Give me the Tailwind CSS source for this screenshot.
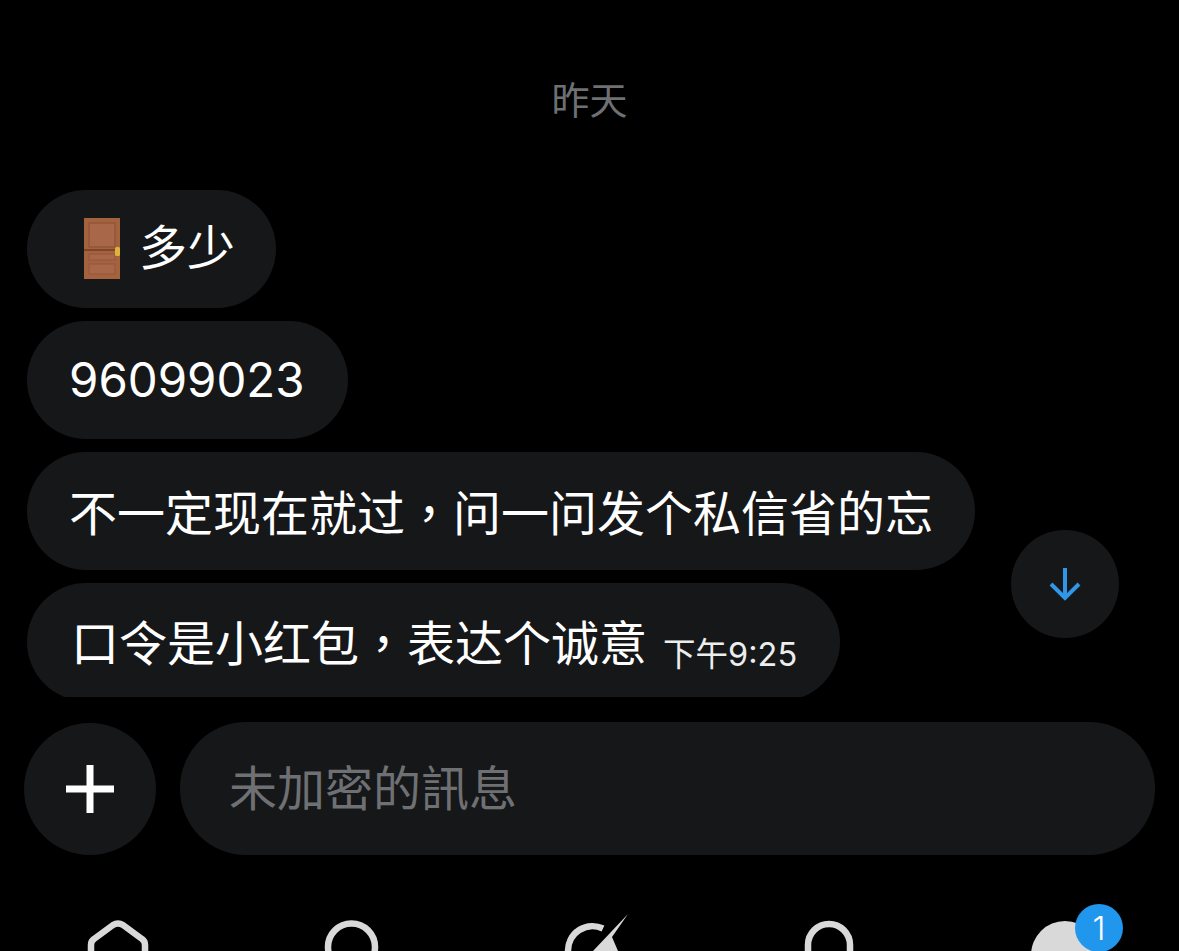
<!DOCTYPE html>
<html>
  <head>
    <meta charset="UTF-8" />
    <title>chat</title>
    <script src="https://cdn.jsdelivr.net/npm/@tailwindcss/browser@4"></script>
  </head>
  <body class="bg-black">
    <div class="w-[1179px] h-[951px] overflow-hidden bg-black text-white flex flex-col font-['Inter','Noto_Sans_CJK_SC',sans-serif]">
      <!-- messages -->
      <div class="relative h-[697px] shrink-0 overflow-hidden pl-[27px] pt-[73px]">
        <div class="text-center text-[38px] leading-[54px] text-[#6e7074] -ml-[27px]">昨天</div>
        <div class="flex flex-col items-start gap-[13px] mt-[63px]">
          <div class="h-[118px] rounded-[59px] bg-[#161719] pl-[57px] pr-[41px] flex items-center gap-[19px] text-[48px]">
            <svg class="-mt-[2px]" width="36" height="61" viewBox="0 0 36 61">
              <rect x="0" y="0" width="36" height="61" fill="#a4623f"/>
              <rect x="5" y="5" width="26" height="24" fill="#a9674a" stroke="#935639" stroke-width="1.5"/>
              <rect x="0" y="31" width="36" height="2" fill="#7d452c"/>
              <rect x="5" y="36" width="26" height="6" fill="#a9674a" stroke="#935639" stroke-width="1"/>
              <rect x="5" y="46" width="26" height="10" fill="#a9674a" stroke="#935639" stroke-width="1"/>
              <rect x="31" y="29" width="5" height="9" rx="1.5" fill="#e0b23c"/>
            </svg>
            <span class="-mt-[2px]">多少</span>
          </div>
          <div class="h-[118px] rounded-[59px] bg-[#161719] pl-[42px] pr-[43px] flex items-center text-[47.4px]">96099023</div>
          <div class="h-[118px] rounded-[59px] bg-[#161719] pl-[42px] pr-[42px] pt-[2px] flex items-center text-[48px] whitespace-nowrap">
            <span>不一定现在就过<span class="font-['Noto_Sans_CJK_TC']">，</span>问一问发个私信省的忘</span>
          </div>
          <div class="h-[118px] rounded-[59px] bg-[#161719] pl-[44px] pr-[43px] flex items-center whitespace-nowrap">
            <span class="text-[48px]">口令是小红包<span class="font-['Noto_Sans_CJK_TC']">，</span>表达个诚意</span>
            <span class="text-[32.5px] ml-[16px] mt-[26px] text-[#eceded]">下午9:25</span>
          </div>
        </div>
        <button class="absolute left-[1011px] top-[530px] w-[108px] h-[108px] rounded-full bg-[#161719] flex items-center justify-center">
          <svg width="32" height="36" viewBox="0 0 32 36" fill="none" stroke="#2f96e8" stroke-width="4">
            <path d="M16 2V32"/>
            <path d="M2 18L16 32L30 18"/>
          </svg>
        </button>
      </div>

      <!-- composer -->
      <div class="flex items-center gap-[24px] pl-[24px] pr-[24px] pt-[25px]">
        <button class="w-[132px] h-[132px] shrink-0 rounded-full bg-[#161719] flex items-center justify-center">
          <svg width="48" height="48" viewBox="0 0 48 48" fill="#fff">
            <rect x="0" y="20.5" width="48" height="7"/>
            <rect x="20.5" y="0" width="7" height="48"/>
          </svg>
        </button>
        <div class="flex-1 h-[133px] rounded-[66px] bg-[#161719] pl-[49px] flex items-center text-[48px] text-[#6e7074] font-['Inter','Noto_Sans_CJK_TC',sans-serif]">未加密的訊息</div>
      </div>

      <!-- tab bar -->
      <div class="relative flex-1">
        <svg class="absolute left-[86px] top-[64px]" width="64" height="32" viewBox="0 0 64 32" fill="none" stroke="#d9d9d9" stroke-width="6.5" stroke-linejoin="round">
          <path d="M5 32V26Q5 22 8 20L27 6Q32 3 37 6L56 20Q59 22 59 26V32"/>
        </svg>
        <svg class="absolute left-[322px] top-[64px]" width="60" height="32" viewBox="0 0 60 32" fill="none" stroke="#d9d9d9" stroke-width="6.5">
          <circle cx="29.5" cy="28" r="23.5"/>
        </svg>
        <svg class="absolute left-[560px] top-[58px]" width="72" height="38" viewBox="0 0 72 38" fill="none">
          <path d="M8 38A24.5 24.5 0 0 1 43 15.5" stroke="#d9d9d9" stroke-width="6.5"/>
          <path d="M68 1L33 38H58L52 24Z" fill="#d9d9d9"/>
        </svg>
        <svg class="absolute left-[802px] top-[64px]" width="54" height="32" viewBox="0 0 54 32" fill="none" stroke="#d9d9d9" stroke-width="6.5">
          <path d="M6 32V26A21 21 0 0 1 48 26V32"/>
        </svg>
        <div class="absolute left-[1031px] top-[66px] w-[68px] h-[68px] rounded-full bg-[#d9d9d9]"></div>
        <div class="absolute left-[1075px] top-[49px] w-[48px] h-[48px] rounded-full bg-[#2196ed] flex items-center justify-center text-[33px] font-light leading-none">1</div>
      </div>
    </div>
  </body>
</html>
